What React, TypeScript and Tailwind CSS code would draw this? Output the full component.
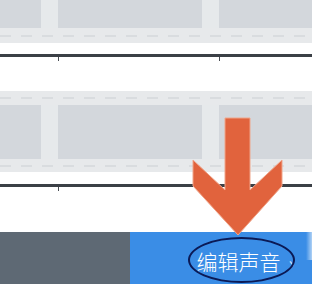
import React from "react";

const dashes =
  "h-[2px] w-full bg-[repeating-linear-gradient(90deg,#d9dcdf_0_11px,transparent_11px_21px)]";

const FrameRow = ({ h }: { h: string }) => (
  <div className={`flex ${h}`}>
    <div className="w-[41px] flex-none bg-[#d3d7dc]" />
    <div className="w-[17px] flex-none bg-[#e6e9eb]" />
    <div className="w-[144px] flex-none bg-[#d3d7dc]" />
    <div className="w-[17px] flex-none bg-[#e6e9eb]" />
    <div className="flex-1 bg-[#d3d7dc]" />
  </div>
);

const DashRow = ({ h }: { h: string }) => (
  <div className={`flex items-center ${h}`}>
    <div className={dashes} />
  </div>
);

const Ruler = () => (
  <div className="flex flex-col">
    <div className="h-[3px] bg-[#3b4046]" />
    <div className="flex h-[4px]">
      <div className="ml-[58px] w-[1px] bg-[#4a4f55]" />
      <div className="ml-[160px] w-[1px] bg-[#4a4f55]" />
    </div>
  </div>
);

export default function App() {
  return (
    <div
      className="relative w-[312px] h-[284px] overflow-hidden bg-white"
      style={{ fontFamily: '"Noto Sans CJK SC", "Liberation Sans", sans-serif' }}
    >
      <div className="flex flex-col">
        {/* top strip */}
        <div className="flex flex-col bg-[#e7e9eb]">
          <FrameRow h="h-[28px]" />
          <DashRow h="h-[15px]" />
        </div>
        <div className="h-[11px]" />
        <Ruler />
        <div className="h-[30px]" />
        {/* second strip */}
        <div className="flex flex-col bg-[#e7e9eb]">
          <DashRow h="h-[14px]" />
          <FrameRow h="h-[54px]" />
          <DashRow h="h-[13px]" />
        </div>
        <div className="h-[12px]" />
        <Ruler />
        <div className="h-[41px]" />
        {/* bottom bar */}
        <div className="flex h-[52px]">
          <div className="w-[130px] bg-[#5e6974]" />
          <div className="relative flex flex-1 items-center justify-end bg-[#3a8de6] pr-[18px] pt-[7px]">
            <span className="text-[21px] font-light leading-none text-white">编辑声音</span>
            <span className="ml-[8px] text-[18px] leading-none text-white/80">›</span>
            <div className="absolute right-0 top-0 h-[28px] w-[6px] bg-gradient-to-r from-transparent to-white/60" />
          </div>
        </div>
      </div>

      {/* ellipse highlight */}
      <div className="absolute left-[188px] top-[237px] h-[46px] w-[107px] rounded-[50%] border-2 border-[#0b1a56]" />

      {/* arrow */}
      <svg className="absolute left-0 top-0" width="312" height="284" viewBox="0 0 312 284">
        <polygon
          points="225,118 250,118 250,190 282,160 282,186 238,235 193,186 193,160 225,190"
          fill="#e1633d"
          stroke="#f0a58a"
          strokeWidth="1"
        />
      </svg>
    </div>
  );
}
